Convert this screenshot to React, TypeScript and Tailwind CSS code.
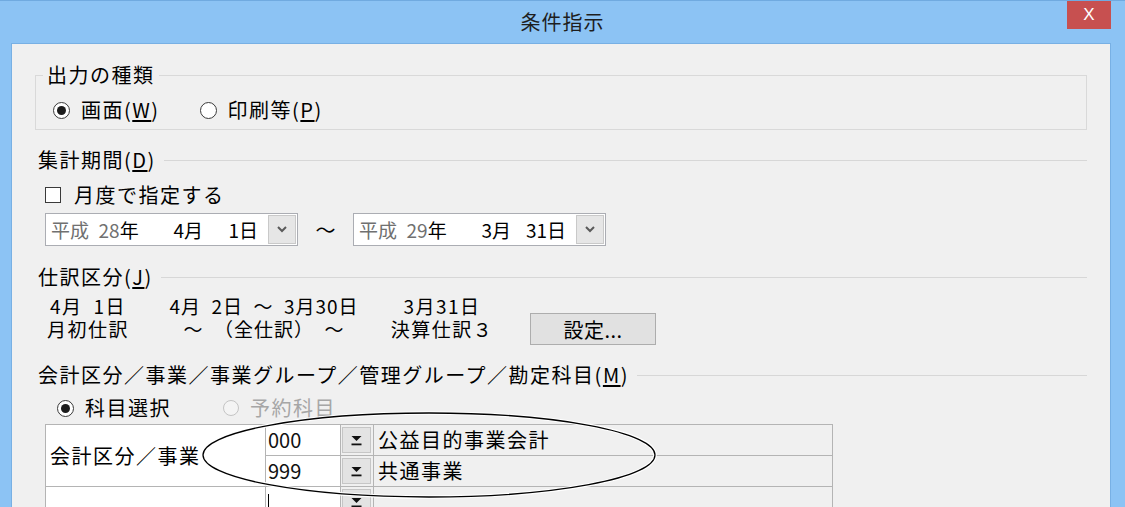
import React from "react";

function Radio({
  checked,
  disabled,
  children,
}: {
  checked?: boolean;
  disabled?: boolean;
  children: React.ReactNode;
}) {
  return (
    <div className="flex items-center gap-[11px]">
      <div
        className={
          disabled
            ? "w-[16px] h-[16px] rounded-full border border-[#c4c4c4] bg-[#f4f4f4] flex items-center justify-center"
            : "w-[17px] h-[17px] rounded-full border border-[#3a3a3a] bg-white flex items-center justify-center"
        }
      >
        {checked && <div className="w-[9px] h-[9px] rounded-full bg-[#1c1c1c]" />}
      </div>
      <span
        className={
          disabled
            ? "text-[20px] leading-[24px] tracking-[1.5px] text-[#a6a6a6] whitespace-nowrap"
            : "text-[20px] leading-[24px] tracking-[1.5px] whitespace-nowrap"
        }
      >
        {children}
      </span>
    </div>
  );
}

function SectionHeader({ children }: { children: React.ReactNode }) {
  return (
    <div className="flex items-center ml-[26px] mr-[23px] h-[24px]">
      <span className="text-[20px] leading-[24px] tracking-[1.5px] whitespace-nowrap">
        {children}
      </span>
      <div className="flex-1 h-px bg-[#d7d7d7] ml-[8px]" />
    </div>
  );
}

function Combo({ year, month, day }: { year: string; month: string; day: string }) {
  return (
    <div className="w-[253px] h-[33px] border border-[#abadb3] bg-white flex items-stretch">
      <div className="flex-1 flex items-center pl-[5px] text-[19px] leading-[24px] whitespace-pre">
        <div className="w-[84px]">
          <span className="text-[#707070]">平成{"\u2002"}{year}</span>
          <span>年</span>
        </div>
        <div className="w-[68px] text-right">{month}月</div>
        <div className="w-[55px] text-right">{day}日</div>
      </div>
      <div className="w-[28px] m-[1px] bg-[#e6e6e6] border border-[#c9c9c9] flex items-center justify-center">
        <svg width="10" height="7" viewBox="0 0 10 7">
          <polyline points="1,1 5,5 9,1" fill="none" stroke="#5a5a5a" strokeWidth="2" />
        </svg>
      </div>
    </div>
  );
}

function CodeCell({ children, cursor }: { children?: React.ReactNode; cursor?: boolean }) {
  return (
    <div className="bg-white border-r border-b border-[#b4b4b4] flex items-center pl-[2px] text-[20px] leading-[24px] text-[#111]">
      {cursor ? <div className="w-px h-[22px] bg-black mt-[6px]" /> : children}
    </div>
  );
}

function BtnCell() {
  return (
    <div className="bg-[#f0f0f0] border-r border-b border-[#b4b4b4] flex items-center pl-[1px]">
      <div className="w-[29px] h-[26px] bg-[#e3e3e3] border border-[#c6c6c6] flex items-center justify-center">
        <svg width="13" height="13" viewBox="0 0 13 13">
          <polygon points="1.5,2 11.5,2 6.5,7" fill="#111" />
          <rect x="1.5" y="9.5" width="10" height="1.8" fill="#111" />
        </svg>
      </div>
    </div>
  );
}

function NameCell({ children }: { children?: React.ReactNode }) {
  return (
    <div className="bg-[#f0f0f0] border-r border-b border-[#b4b4b4] flex items-center pl-[4px] text-[20px] leading-[24px] tracking-[1.5px]">
      {children}
    </div>
  );
}

const SP = "\u2002";

export default function App() {
  return (
    <div className="w-[1125px] h-[507px] overflow-hidden bg-[#8cc3f4] border-t border-[#70aae0] flex flex-col text-black font-['Noto_Sans_CJK_JP','Noto_Sans',sans-serif]">
      {/* Title bar */}
      <div className="h-[42px] shrink-0 grid grid-cols-[1fr_auto_1fr]">
        <div />
        <div className="text-[20px] leading-[42px] text-[#1e1e1e] tracking-[1px]">条件指示</div>
        <div className="flex justify-end items-start pr-[14px]">
          <div className="w-[44px] h-[28px] bg-[#c75050] text-white flex items-center justify-center text-[17px] font-['Liberation_Sans',sans-serif]">
            X
          </div>
        </div>
      </div>

      {/* Client area */}
      <div className="flex-1 ml-[11px] mr-[14px] bg-[#f0f0f0] border border-b-0 border-[#78b0e4] flex flex-col">
        {/* 出力の種類 */}
        <fieldset className="mt-[19px] ml-[23px] w-[1052px] border border-[#d9d9d9] pb-[7px]">
          <legend className="ml-[7px] px-[4px] text-[20px] leading-[24px] tracking-[1.5px]">
            出力の種類
          </legend>
          <div className="flex items-center h-[24px] mt-[11px] pl-[17px] gap-[40px]">
            <Radio checked>
              画面(<span className="underline underline-offset-2">W</span>)
            </Radio>
            <Radio>
              印刷等(<span className="underline underline-offset-2">P</span>)
            </Radio>
          </div>
        </fieldset>

        {/* 集計期間 */}
        <div className="mt-[18px]">
          <SectionHeader>
            集計期間(<span className="underline underline-offset-2">D</span>)
          </SectionHeader>
        </div>
        <div className="mt-[11px] ml-[33px] h-[24px] flex items-center gap-[13px]">
          <div className="w-[16px] h-[16px] border border-[#3a3a3a] bg-white" />
          <span className="text-[20px] leading-[24px] tracking-[1.5px]">月度で指定する</span>
        </div>
        <div className="mt-[6px] ml-[33px] flex items-center">
          <Combo year="28" month="4" day={SP + "1"} />
          <div className="w-[55px] text-center text-[20px] leading-[24px]">～</div>
          <Combo year="29" month="3" day="31" />
        </div>

        {/* 仕訳区分 */}
        <div className="mt-[19px]">
          <SectionHeader>
            仕訳区分(<span className="underline underline-offset-2">J</span>)
          </SectionHeader>
        </div>
        <div className="mt-[5px] ml-[26px] flex items-start text-[19px] leading-[23px] tracking-[1.5px] whitespace-pre">
          <div className="w-[100px] text-center">
            <div>{`4月${SP}1日`}</div>
            <div>月初仕訳</div>
          </div>
          <div className="w-[200px] ml-[26px] text-center tracking-[1px]">
            <div>{`4月${SP}2日${SP}～${SP}3月30日`}</div>
            <div>{`～${SP}（全仕訳）${SP}～`}</div>
          </div>
          <div className="w-[110px] ml-[23px] text-center">
            <div>3月31日</div>
            <div>決算仕訳３</div>
          </div>
          <div className="ml-[33px] mt-[19px] w-[126px] h-[32px] bg-[#e1e1e1] border border-[#adadad] flex items-center justify-center text-[20px] tracking-[0.5px]">
            設定...
          </div>
        </div>

        {/* 会計区分 */}
        <div className="mt-[18px]">
          <SectionHeader>
            会計区分／事業／事業グループ／管理グループ／勘定科目(<span className="underline underline-offset-2">M</span>)
          </SectionHeader>
        </div>
        <div className="mt-[9px] ml-[45px] h-[24px] flex items-center gap-[52px]">
          <Radio checked>科目選択</Radio>
          <Radio disabled>予約科目</Radio>
        </div>

        <div className="relative mt-[4px] ml-[33px] w-[788px]">
          <div className="grid grid-cols-[220px_75px_33px_459px] grid-rows-[31px_31px_31px] border-l border-t border-[#b4b4b4]">
            <div className="row-span-2 bg-white border-r border-b border-[#b4b4b4] flex items-center pl-[4px] text-[20px] leading-[24px] tracking-[1.5px]">
              会計区分／事業
            </div>
            <CodeCell>000</CodeCell>
            <BtnCell />
            <NameCell>公益目的事業会計</NameCell>
            <CodeCell>999</CodeCell>
            <BtnCell />
            <NameCell>共通事業</NameCell>
            <div className="bg-white border-r border-b border-[#b4b4b4]" />
            <CodeCell cursor />
            <BtnCell />
            <NameCell />
          </div>
          <svg
            className="absolute left-[154px] top-[-15px] pointer-events-none"
            width="460"
            height="92"
            viewBox="0 0 460 92"
          >
            <ellipse cx="230" cy="46" rx="226" ry="42" fill="none" stroke="#ffffff" strokeWidth="3.5" />
            <ellipse cx="230" cy="46" rx="226" ry="42" fill="none" stroke="#000000" strokeWidth="1.3" />
          </svg>
        </div>
      </div>
    </div>
  );
}
